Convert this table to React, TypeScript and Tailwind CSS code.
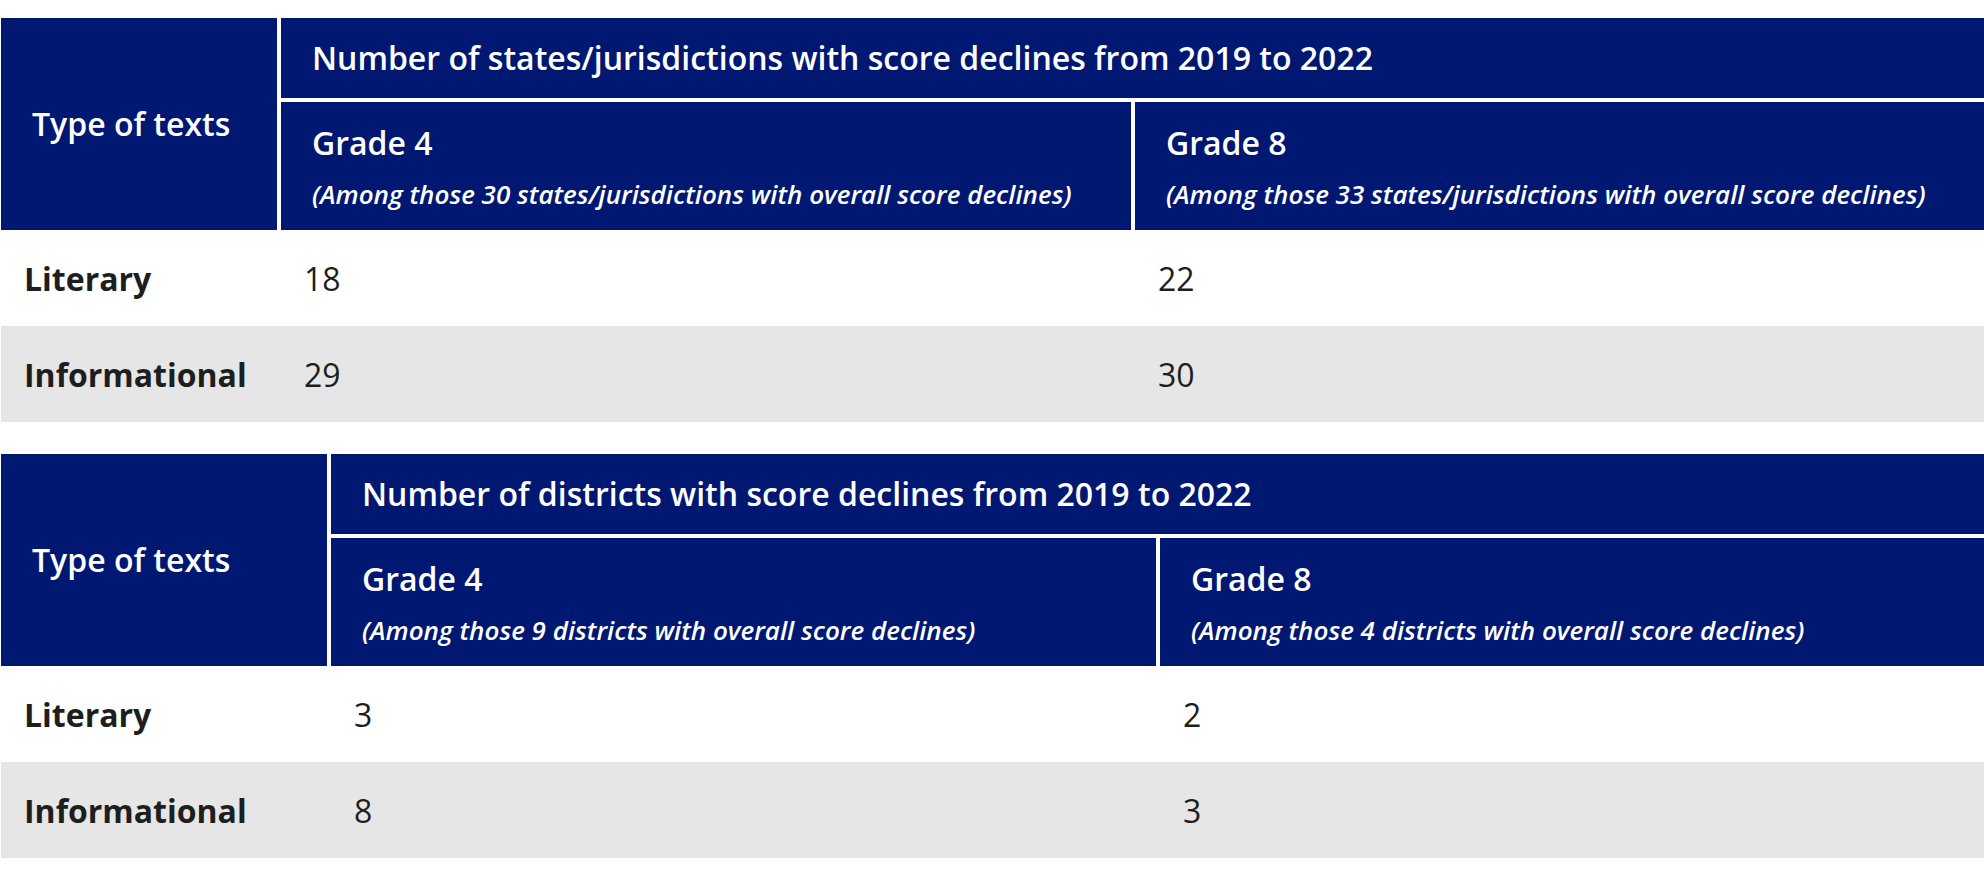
import React from "react";

type TableProps = {
  cols: string;
  title: string;
  g4: string;
  g8: string;
  rows: [string, string, string][];
  className?: string;
};

function DataTable({ cols, title, g4, g8, rows, className }: TableProps) {
  return (
    <div className={`ml-[1px] ${className ?? ""}`}>
      <div className={`grid ${cols} grid-rows-[80px_128px] gap-[4px] text-white`}>
        <div className="row-span-2 bg-[#001871] flex items-center pl-[31px] text-[32px] leading-[48px] font-semibold">
          Type of texts
        </div>
        <div className="col-span-2 bg-[#001871] flex items-center pl-[31px] text-[32px] leading-[48px] font-semibold">
          {title}
        </div>
        <div className="bg-[#001871] flex flex-col pl-[31px] pt-[17px] gap-[9px]">
          <div className="text-[32px] leading-[48px] font-semibold">Grade 4</div>
          <div className="text-[26px] leading-[36px] font-semibold italic">{g4}</div>
        </div>
        <div className="bg-[#001871] flex flex-col pl-[31px] pt-[17px] gap-[9px]">
          <div className="text-[32px] leading-[48px] font-semibold">Grade 8</div>
          <div className="text-[26px] leading-[36px] font-semibold italic">{g8}</div>
        </div>
      </div>
      {rows.map((r, i) => (
        <div
          key={r[0]}
          className={`grid ${cols} gap-x-[4px] h-[96px] items-center text-[32px] leading-[48px] text-[#1e1e1e] ${
            i % 2 === 1 ? "bg-[#e6e6e6]" : "bg-white"
          }`}
        >
          <div className="pl-[23px] pt-[2px] font-bold">{r[0]}</div>
          <div className="pl-[23px] pt-[2px]">{r[1]}</div>
          <div className="pl-[23px] pt-[2px]">{r[2]}</div>
        </div>
      ))}
    </div>
  );
}

export default function App() {
  return (
    <div
      className="w-[1984px] h-[889px] bg-white overflow-hidden pt-[18px]"
      style={{ fontFamily: '"Open Sans", "Noto Sans", sans-serif' }}
    >
      <DataTable
        cols="grid-cols-[276px_850px_1fr]"
        title="Number of states/jurisdictions with score declines from 2019 to 2022"
        g4="(Among those 30 states/jurisdictions with overall score declines)"
        g8="(Among those 33 states/jurisdictions with overall score declines)"
        rows={[
          ["Literary", "18", "22"],
          ["Informational", "29", "30"],
        ]}
      />
      <DataTable
        className="mt-[32px]"
        cols="grid-cols-[326px_825px_1fr]"
        title="Number of districts with score declines from 2019 to 2022"
        g4="(Among those 9 districts with overall score declines)"
        g8="(Among those 4 districts with overall score declines)"
        rows={[
          ["Literary", "3", "2"],
          ["Informational", "8", "3"],
        ]}
      />
    </div>
  );
}
